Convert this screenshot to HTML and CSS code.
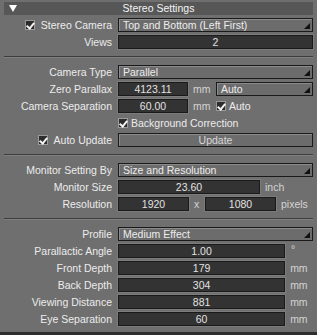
FILE: index.html
```html
<!DOCTYPE html>
<html lang="en">
<head>
<meta charset="UTF-8">
<title>Stereo Settings</title>
<link rel="stylesheet" href="styles.css">
</head>
<body>
<div class="panel">
    <div class="header">
        <svg class="tri" width="8" height="7" viewBox="0 0 8 7"><polygon points="0,0 8,0 4,7" fill="#fff"/></svg>
        <span>Stereo Settings</span>
    </div>

    <div class="section">
        <div class="row">
            <div class="lbl"><span class="cb on"></span>Stereo Camera</div>
            <div class="field"><div class="select">Top and Bottom (Left First)</div></div>
        </div>
        <div class="row">
            <div class="lbl">Views</div>
            <div class="field"><div class="num grow">2</div></div>
        </div>
    </div>

    <div class="section">
        <div class="row">
            <div class="lbl">Camera Type</div>
            <div class="field"><div class="select">Parallel</div></div>
        </div>
        <div class="row">
            <div class="lbl">Zero Parallax</div>
            <div class="field">
                <div class="num w70">4123.11</div>
                <div class="unit">mm</div>
                <div class="select">Auto</div>
            </div>
        </div>
        <div class="row">
            <div class="lbl">Camera Separation</div>
            <div class="field">
                <div class="num w70">60.00</div>
                <div class="unit">mm</div>
                <div class="check"><span class="cb on"></span>Auto</div>
            </div>
        </div>
        <div class="row">
            <div class="lbl"></div>
            <div class="field"><div class="check"><span class="cb on"></span>Background Correction</div></div>
        </div>
        <div class="row">
            <div class="lbl"><span class="cb on"></span>Auto Update</div>
            <div class="field"><div class="button">Update</div></div>
        </div>
    </div>

    <div class="section">
        <div class="row">
            <div class="lbl">Monitor Setting By</div>
            <div class="field"><div class="select">Size and Resolution</div></div>
        </div>
        <div class="row">
            <div class="lbl">Monitor Size</div>
            <div class="field">
                <div class="num w142">23.60</div>
                <div class="unit">inch</div>
            </div>
        </div>
        <div class="row">
            <div class="lbl">Resolution</div>
            <div class="field">
                <div class="num w71">1920</div>
                <div class="unit x">x</div>
                <div class="num w71">1080</div>
                <div class="unit">pixels</div>
            </div>
        </div>
    </div>

    <div class="section last">
        <div class="row">
            <div class="lbl">Profile</div>
            <div class="field"><div class="select">Medium Effect</div></div>
        </div>
        <div class="row">
            <div class="lbl">Parallactic Angle</div>
            <div class="field"><div class="num w168">1.00</div><div class="unit deg">°</div></div>
        </div>
        <div class="row">
            <div class="lbl">Front Depth</div>
            <div class="field"><div class="num w168">179</div><div class="unit">mm</div></div>
        </div>
        <div class="row">
            <div class="lbl">Back Depth</div>
            <div class="field"><div class="num w168">304</div><div class="unit">mm</div></div>
        </div>
        <div class="row">
            <div class="lbl">Viewing Distance</div>
            <div class="field"><div class="num w168">881</div><div class="unit">mm</div></div>
        </div>
        <div class="row">
            <div class="lbl">Eye Separation</div>
            <div class="field"><div class="num w168">60</div><div class="unit">mm</div></div>
        </div>
    </div>
    <div class="bottom"></div>
</div>
</body>
</html>
```

FILE: styles.css
```css
html, body {
    margin: 0;
    background: #6f6f6f;
    font-family: "Liberation Sans", Arial, sans-serif;
    font-size: 10.5px;
    color: #ececec;
}
.panel {
    padding-top: 2px;
    height: 335px;
    box-sizing: border-box;
    display: flex;
    flex-direction: column;
}
.header {
    position: relative;
    margin: 0 4px;
    height: 13px;
    line-height: 13px;
    background: #575757;
    text-align: center;
    color: #f4f4f4;
}
.header .tri {
    position: absolute;
    left: 5px;
    top: 3px;
}
.section {
    margin: 0 4px;
    padding: 3px 0 7px;
    border-bottom: 1px solid #3c3c3c;
    box-shadow: 0 1px 0 #808080;
    display: flex;
    flex-direction: column;
    gap: 3px;
}
.section + .section {
    padding-top: 8px;
}
.section.last {
    border-bottom: none;
    box-shadow: none;
    padding-bottom: 0;
    flex: 1;
}
.row {
    display: grid;
    grid-template-columns: 108px 195px;
    column-gap: 6px;
    height: 14px;
    line-height: 14px;
}
.lbl {
    display: flex;
    justify-content: flex-end;
    align-items: center;
    gap: 6px;
    white-space: nowrap;
}
.field {
    display: flex;
    align-items: center;
    white-space: nowrap;
}
.select, .num, .button {
    box-sizing: border-box;
    height: 14px;
    line-height: 12px;
    border: 1px solid #1a1a1a;
}
.select {
    position: relative;
    flex: 1;
    padding-left: 4px;
    background: #6c6c6c;
    box-shadow: inset 1px 1px 0 #8c8c8c;
}
.select::after {
    content: "";
    position: absolute;
    right: 2px;
    bottom: 2px;
    border-left: 6px solid transparent;
    border-bottom: 6px solid #111;
}
.button {
    flex: 1;
    text-align: center;
    background: #6c6c6c;
    box-shadow: inset 1px 1px 0 #8c8c8c;
    color: #d8d8d8;
}
.num {
    background: #333333;
    text-align: center;
    color: #e2e2e2;
    box-shadow: 0 0 0 1px #7c7c7c;
}
.grow { flex: 1; }
.w70 { width: 70px; }
.w71 { width: 71px; }
.w142 { width: 142px; }
.w168 { width: 168px; }
.unit {
    width: 28px;
    padding-left: 5px;
    box-sizing: border-box;
    color: #d4d4d4;
}
.unit.x {
    width: 16px;
    padding-left: 5px;
}
.unit.deg {
    align-self: flex-start;
    line-height: 10px;
    padding-left: 6px;
}
.check {
    display: flex;
    align-items: center;
    gap: 3px;
}
.cb {
    box-sizing: border-box;
    width: 10px;
    height: 10px;
    border: 1px solid #9a9a9a;
    background: #2c2c2c;
    position: relative;
}
.cb.on::after {
    content: "";
    position: absolute;
    left: 2px;
    top: 0px;
    width: 3px;
    height: 6px;
    border-right: 2px solid #f2f2f2;
    border-bottom: 2px solid #f2f2f2;
    transform: rotate(40deg);
}
.bottom {
    height: 3px;
    background: #2e2e2e;
}
```
